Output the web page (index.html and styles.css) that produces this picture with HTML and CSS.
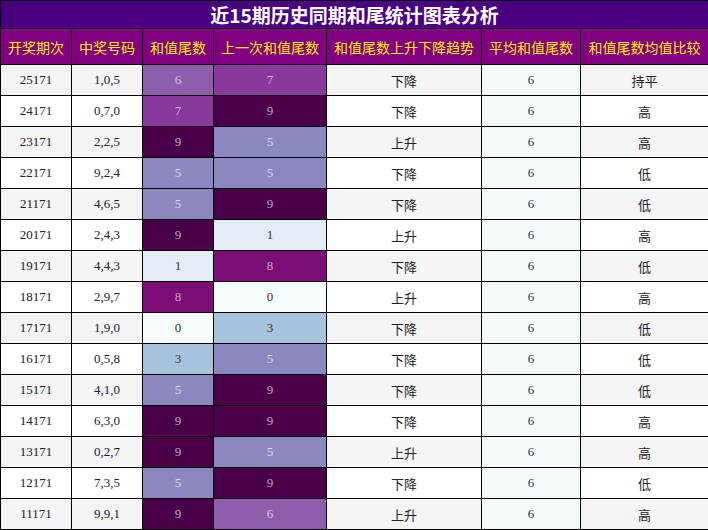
FILE: index.html
```html
<!DOCTYPE html>
<html lang="zh">
<head>
<meta charset="utf-8">
<title>近15期历史同期和尾统计图表分析</title>
<link rel="stylesheet" href="styles.css">
</head>
<body>
<table class="stat">
  <colgroup>
    <col class="c1"><col class="c2"><col class="c3"><col class="c4"><col class="c5"><col class="c6"><col class="c7">
  </colgroup>
  <thead>
    <tr class="title-row"><th colspan="7">近15期历史同期和尾统计图表分析</th></tr>
    <tr class="head-row">
      <th>开奖期次</th><th>中奖号码</th><th>和值尾数</th><th>上一次和值尾数</th><th>和值尾数上升下降趋势</th><th>平均和值尾数</th><th>和值尾数均值比较</th>
    </tr>
  </thead>
  <tbody>
    <tr><td class="num">25171</td><td class="num">1,0,5</td><td class="num v6">6</td><td class="num v7">7</td><td>下降</td><td class="num avg">6</td><td>持平</td></tr>
    <tr><td class="num">24171</td><td class="num">0,7,0</td><td class="num v7">7</td><td class="num v9">9</td><td>下降</td><td class="num avg">6</td><td>高</td></tr>
    <tr><td class="num">23171</td><td class="num">2,2,5</td><td class="num v9">9</td><td class="num v5">5</td><td>上升</td><td class="num avg">6</td><td>高</td></tr>
    <tr><td class="num">22171</td><td class="num">9,2,4</td><td class="num v5">5</td><td class="num v5">5</td><td>下降</td><td class="num avg">6</td><td>低</td></tr>
    <tr><td class="num">21171</td><td class="num">4,6,5</td><td class="num v5">5</td><td class="num v9">9</td><td>下降</td><td class="num avg">6</td><td>低</td></tr>
    <tr><td class="num">20171</td><td class="num">2,4,3</td><td class="num v9">9</td><td class="num v1">1</td><td>上升</td><td class="num avg">6</td><td>高</td></tr>
    <tr><td class="num">19171</td><td class="num">4,4,3</td><td class="num v1">1</td><td class="num v8">8</td><td>下降</td><td class="num avg">6</td><td>低</td></tr>
    <tr><td class="num">18171</td><td class="num">2,9,7</td><td class="num v8">8</td><td class="num v0">0</td><td>上升</td><td class="num avg">6</td><td>高</td></tr>
    <tr><td class="num">17171</td><td class="num">1,9,0</td><td class="num v0">0</td><td class="num v3">3</td><td>下降</td><td class="num avg">6</td><td>低</td></tr>
    <tr><td class="num">16171</td><td class="num">0,5,8</td><td class="num v3">3</td><td class="num v5">5</td><td>下降</td><td class="num avg">6</td><td>低</td></tr>
    <tr><td class="num">15171</td><td class="num">4,1,0</td><td class="num v5">5</td><td class="num v9">9</td><td>下降</td><td class="num avg">6</td><td>低</td></tr>
    <tr><td class="num">14171</td><td class="num">6,3,0</td><td class="num v9">9</td><td class="num v9">9</td><td>下降</td><td class="num avg">6</td><td>高</td></tr>
    <tr><td class="num">13171</td><td class="num">0,2,7</td><td class="num v9">9</td><td class="num v5">5</td><td>上升</td><td class="num avg">6</td><td>高</td></tr>
    <tr><td class="num">12171</td><td class="num">7,3,5</td><td class="num v5">5</td><td class="num v9">9</td><td>下降</td><td class="num avg">6</td><td>低</td></tr>
    <tr><td class="num">11171</td><td class="num">9,9,1</td><td class="num v9">9</td><td class="num v6">6</td><td>上升</td><td class="num avg">6</td><td>高</td></tr>
  </tbody>
</table>
</body>
</html>
```
FILE: styles.css
```css
html, body {
  margin: 0;
  padding: 0;
  background: #ffffff;
}

.stat {
  width: 708px;
  border-collapse: collapse;
  table-layout: fixed;
  font-family: "Noto Sans CJK SC", "Noto Sans", sans-serif;
  font-size: 13px;
  color: #222;
}

.c1 { width: 71px; }
.c2 { width: 71px; }
.c3 { width: 71px; }
.c4 { width: 113px; }
.c5 { width: 155px; }
.c6 { width: 99px; }
.c7 { width: 128px; }

.stat th,
.stat td {
  border: 1px solid #000;
  padding: 0;
  text-align: center;
  vertical-align: middle;
}

.title-row th {
  height: 27px;
  background: #4b0082;
  color: #ffffff;
  font-size: 19px;
  font-weight: bold;
  line-height: 27px;
}

.head-row th {
  height: 35px;
  background: #800080;
  color: #ffee00;
  font-size: 14px;
  font-weight: normal;
}

.stat td {
  height: 30px;
}

.stat tbody tr:nth-child(odd) { background: #f4f4f4; }
.stat tbody tr:nth-child(even) { background: #ffffff; }

.num {
  font-family: "Liberation Serif", "Times New Roman", serif;
  font-size: 13px;
}

.stat td.avg { background: #f5fbfb; color: #333; }

.stat td.v0 { background: #f7fcfd; color: #333; }
.stat td.v1 { background: #e2eef4; color: #333; }
.stat td.v3 { background: #a6c3de; color: #333; }
.stat td.v5 { background: #8b88bf; color: rgba(255, 255, 255, 0.7); }
.stat td.v6 { background: #8c5eab; color: rgba(255, 255, 255, 0.65); }
.stat td.v7 { background: #88399b; color: rgba(255, 255, 255, 0.65); }
.stat td.v8 { background: #7d0e77; color: rgba(255, 255, 255, 0.6); }
.stat td.v9 { background: #4a0048; color: rgba(255, 255, 255, 0.65); }
```
